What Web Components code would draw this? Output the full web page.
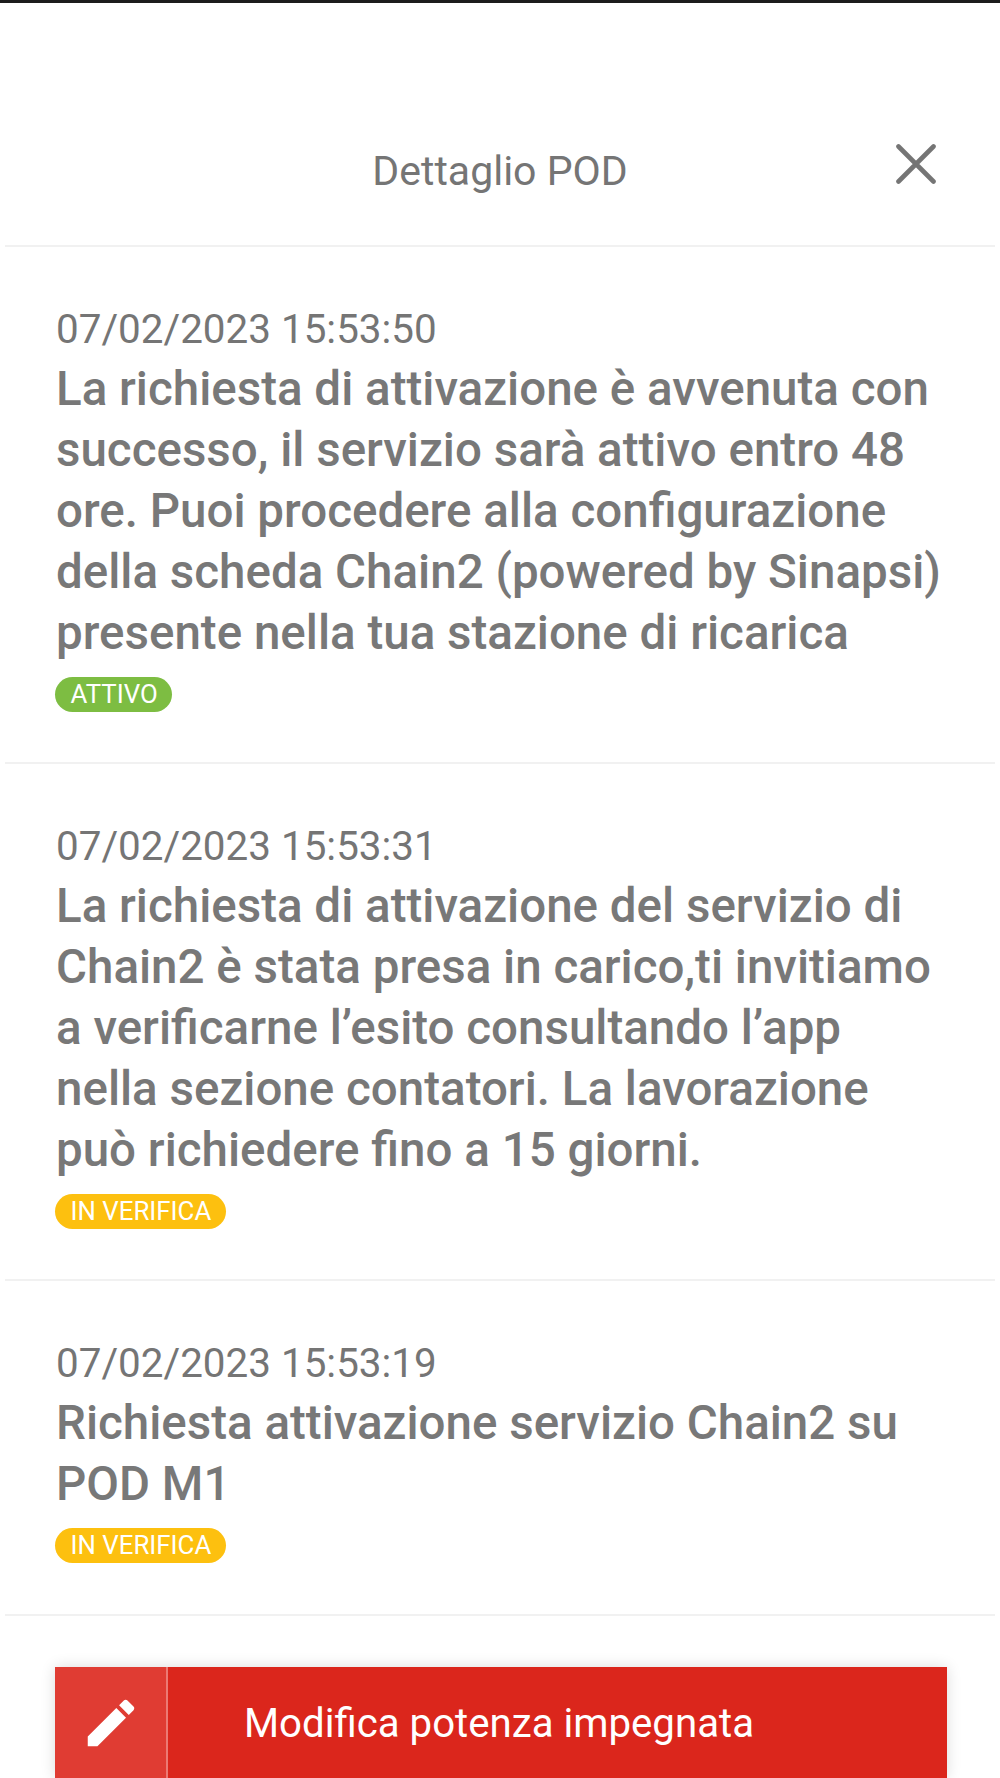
<!DOCTYPE html>
<html lang="it">
<head>
<meta charset="utf-8">
<title>Dettaglio POD</title>
<style>
html, body { margin:0; padding:0; background:#fff; }
body { font-family:Roboto, "Liberation Sans", sans-serif; color:#757575; height:1778px; overflow:hidden; }
</style>
</head>
<body>
<pod-header titolo="Dettaglio POD"></pod-header>
<pod-event data="07/02/2023 15:53:50" stato="ATTIVO" tipo="ok">La richiesta di attivazione è avvenuta con successo, il servizio sarà attivo entro 48 ore. Puoi procedere alla configurazione della scheda Chain2 (powered by Sinapsi) presente nella tua stazione di ricarica</pod-event>
<pod-event data="07/02/2023 15:53:31" stato="IN VERIFICA" tipo="wait">La richiesta di attivazione del servizio di Chain2 è stata presa in carico,ti invitiamo a verificarne l’esito consultando l’app nella sezione contatori. La lavorazione può richiedere fino a 15 giorni.</pod-event>
<pod-event style="padding-bottom:51px" data="07/02/2023 15:53:19" stato="IN VERIFICA" tipo="wait">Richiesta attivazione servizio Chain2 su POD M1</pod-event>
<pod-action>Modifica potenza impegnata</pod-action>

<script>
customElements.define('pod-header',
  class extends HTMLElement {
    constructor(){ super(); this.attachShadow({mode:'open'});
      this.shadowRoot.innerHTML = `
<style>
:host { display:block; }
.status { height:3px; background:#1d1d1d; }
.bar { height:244px; margin:0 5px; box-sizing:border-box; border-bottom:2px solid #f1f1f1; display:grid; grid-template-columns:1fr auto 1fr; align-items:center; padding-top:93px; }
h1 { grid-column:2; margin:0; font-size:41px; font-weight:400; line-height:48px; color:#757575; }
button { grid-column:3; justify-self:end; margin:-14px 59px 0 0; padding:0; border:0; background:none; width:40px; height:40px; }
svg { display:block; }
</style>
<div class="status"></div>
<header class="bar">
  <h1>${this.getAttribute("titolo")}</h1>
  <button aria-label="Chiudi"><svg width="40" height="40" viewBox="0 0 40 40"><path d="M2.5 2.5 37.5 37.5M37.5 2.5 2.5 37.5" stroke="#757575" stroke-width="4.6" stroke-linecap="round" fill="none"/></svg></button>
</header>`;
    }
  });

customElements.define('pod-event',
  class extends HTMLElement {
    constructor(){ super(); this.attachShadow({mode:'open'});
      this.shadowRoot.innerHTML = `
<style>
:host { display:block; margin:0 5px; padding:54px 50px 50px 51px; border-bottom:2px solid #f1f1f1; }
.data { font-size:40.4px; line-height:58px; color:#757575; }
.testo { font-size:47.5px; line-height:61px; font-weight:500; color:#787878; margin-bottom:13px; }
.badge { display:inline-block; height:35px; line-height:35px; padding:0 14.5px 0 15.5px; margin-left:-1px; border-radius:18px; font-size:25.8px; color:#fff; vertical-align:top; }
.ok { background:#7dbd42; }
.wait { background:#fdc00f; }
</style>
<div class="data">${this.getAttribute("data")}</div>
<div class="testo"><slot></slot></div>
<span class="badge ${this.getAttribute("tipo")}">${this.getAttribute("stato")}</span>`;
    }
  });

customElements.define('pod-action',
  class extends HTMLElement {
    constructor(){ super(); this.attachShadow({mode:'open'});
      this.shadowRoot.innerHTML = `
<style>
:host { display:flex; height:111px; margin:51px 53px 0 55px; background:#db261c; color:#fff; box-shadow:0 0 14px rgba(0,0,0,.14); }
.icona { width:113px; flex:none; display:flex; align-items:center; justify-content:center; background:#e03c33; border-right:2px solid #ec7a74; box-sizing:border-box; }
.label { flex:1; padding:3px 0 0 76px; font-size:40.2px; line-height:108px; white-space:nowrap; }
svg { display:block; }
</style>
<div class="icona"><svg width="62" height="62" viewBox="0 0 24 24" fill="#fff"><path d="M3 17.25V21h3.75L17.81 9.94l-3.75-3.75L3 17.25zM20.71 7.04c.39-.39.39-1.02 0-1.41l-2.34-2.34c-.39-.39-1.02-.39-1.41 0l-1.83 1.83 3.75 3.75 1.83-1.83z"/></svg></div>
<div class="label"><slot></slot></div>`;
    }
  });
</script>
</body>
</html>
